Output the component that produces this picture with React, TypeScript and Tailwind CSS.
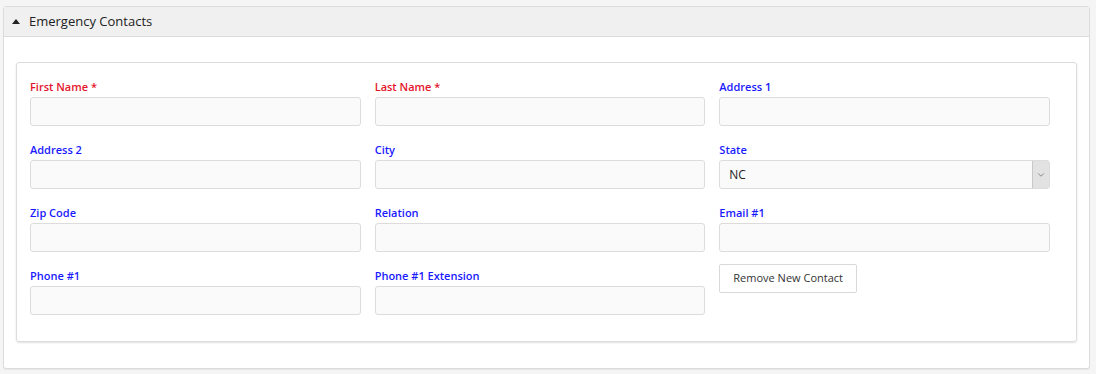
import { ChevronDown } from "lucide-react";

type Field = { label: string; required?: boolean; kind?: "input" | "select" | "button"; value?: string };

const fields: Field[] = [
	{ label: "First Name", required: true },
	{ label: "Last Name", required: true },
	{ label: "Address 1" },
	{ label: "Address 2" },
	{ label: "City" },
	{ label: "State", kind: "select", value: "NC" },
	{ label: "Zip Code" },
	{ label: "Relation" },
	{ label: "Email #1" },
	{ label: "Phone #1" },
	{ label: "Phone #1 Extension" },
	{ label: "Remove New Contact", kind: "button" },
];

function FormField({ field }: { field: Field }) {
	if (field.kind === "button") {
		return (
			<div className="-mt-[4px]">
				<button className="h-[29px] rounded-[2px] border border-[#d9d9d9] bg-white px-[13px] text-[11px] text-[#333]">
					{field.label}
				</button>
			</div>
		);
	}
	return (
		<div className="flex flex-col">
			<label
				className={`mb-[2px] h-[16px] text-[11px] leading-[16px] font-semibold ${
					field.required ? "text-[#e3152b]" : "text-[#1a1aff]"
				}`}
			>
				{field.label}
				{field.required && " *"}
			</label>
			{field.kind === "select" ? (
				<div className="flex h-[29px] items-stretch overflow-hidden rounded-[3px] border border-[#dcdcdc] bg-[#fafafa]">
					<span className="flex flex-1 items-center px-[9px] text-[12px] text-[#222]">{field.value}</span>
					<span className="flex w-[17px] items-center justify-center border-l border-[#c8c8c8] bg-[#e2e2e2]">
						<ChevronDown size={10} strokeWidth={1.75} className="text-[#666]" />
					</span>
				</div>
			) : (
				<input className="h-[29px] rounded-[3px] border border-[#dcdcdc] bg-[#fafafa] px-2 text-[12px] outline-none" />
			)}
		</div>
	);
}

export default function App() {
	return (
		<div
			className="min-h-screen bg-[#f5f5f5] pt-[6px] pr-[6px] pl-[3px]"
			style={{ fontFamily: '"Open Sans", "Noto Sans", sans-serif' }}
		>
			<div className="rounded-[3px] border border-[#dcdcdc] bg-white shadow-[0_1px_1px_rgba(0,0,0,0.06)]">
				<div className="flex h-[30px] items-center gap-[9px] border-b border-[#dcdcdc] bg-[#f0f0f0] pr-[10px] pl-[8px]">
					<svg width="8" height="5" viewBox="0 0 8 5">
						<path d="M0 5 L4 0 L8 5 Z" fill="#222" />
					</svg>
					<span className="text-[13px] text-[#222]">Emergency Contacts</span>
				</div>
				<div className="px-[12px] pt-[25px] pb-[26px]">
					<div className="rounded-[3px] border border-[#dcdcdc] pt-[16px] pr-[26px] pb-[26px] pl-[13px] shadow-[0_1px_2px_rgba(0,0,0,0.12)]">
						<div className="grid grid-cols-3 gap-x-[14px] gap-y-[16px]">
							{fields.map((f) => (
								<FormField key={f.label} field={f} />
							))}
						</div>
					</div>
				</div>
			</div>
		</div>
	);
}
